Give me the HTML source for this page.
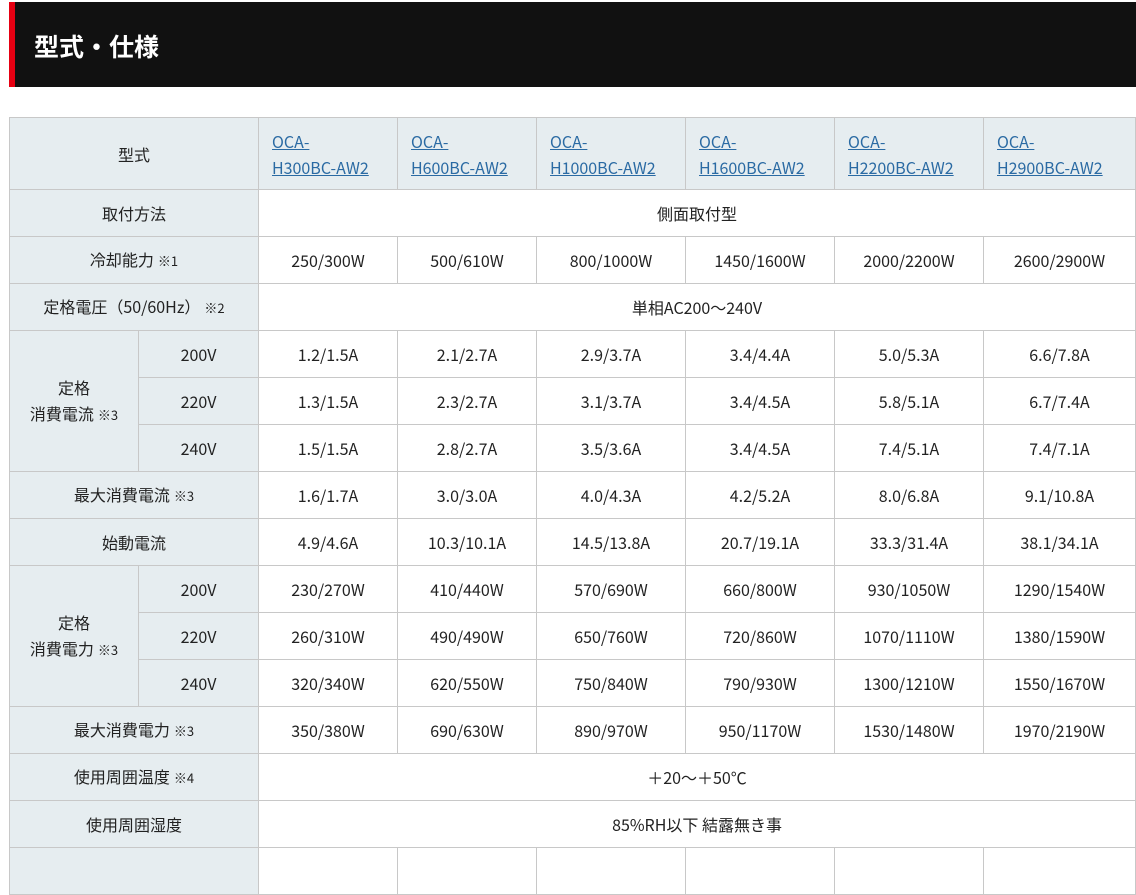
<!DOCTYPE html>
<html><head><meta charset="utf-8"><style>
html,body{margin:0;padding:0;background:#fff;width:1136px;height:851px;overflow:hidden;}
body{font-family:"Noto Sans CJK JP","Liberation Sans",sans-serif;color:#222;}
.hd{position:absolute;left:9px;top:2px;width:1127px;height:85px;background:#111;}
.hd .r{position:absolute;left:0;top:0;width:6px;height:85px;background:#e60012;}
.hd h1{position:absolute;left:25px;top:2px;margin:0;line-height:85px;font-size:25px;font-weight:bold;color:#fff;}
table{position:absolute;left:9px;top:117px;border-collapse:collapse;table-layout:fixed;width:1126px;font-size:16px;line-height:20px;}
td{border:1px solid #c8c8c8;text-align:center;height:46px;padding:0;vertical-align:middle;}
td.l{background:#e6edf0;}
td.m{background:#e6edf0;text-align:left;padding-left:13px;line-height:26px;}
td.m a{color:#2a6aa3;text-decoration:underline;}
tr.h td{height:71px;}
small{font-size:13px;margin-left:4px;}
</style></head><body>
<div class="hd"><div class="r"></div><h1>型式・仕様</h1></div>
<table>
<colgroup><col style="width:129px"><col style="width:120px"><col style="width:139px"><col style="width:139px"><col style="width:149px"><col style="width:149px"><col style="width:149px"><col style="width:152px"></colgroup>
<tr class="h"><td class="l" colspan="2">型式</td><td class="m"><a>OCA-<br>H300BC-AW2</a></td><td class="m"><a>OCA-<br>H600BC-AW2</a></td><td class="m"><a>OCA-<br>H1000BC-AW2</a></td><td class="m"><a>OCA-<br>H1600BC-AW2</a></td><td class="m"><a>OCA-<br>H2200BC-AW2</a></td><td class="m"><a>OCA-<br>H2900BC-AW2</a></td></tr>
<tr><td class="l" colspan="2">取付方法</td><td colspan="6">側面取付型</td></tr>
<tr><td class="l" colspan="2">冷却能力<small>※1</small></td><td>250/300W</td><td>500/610W</td><td>800/1000W</td><td>1450/1600W</td><td>2000/2200W</td><td>2600/2900W</td></tr>
<tr><td class="l" colspan="2">定格電圧（50/60Hz）<small>※2</small></td><td colspan="6">単相AC200～240V</td></tr>
<tr><td class="l" rowspan="3" style="line-height:26px">定格<br>消費電流<small>※3</small></td><td class="l">200V</td><td>1.2/1.5A</td><td>2.1/2.7A</td><td>2.9/3.7A</td><td>3.4/4.4A</td><td>5.0/5.3A</td><td>6.6/7.8A</td></tr>
<tr><td class="l">220V</td><td>1.3/1.5A</td><td>2.3/2.7A</td><td>3.1/3.7A</td><td>3.4/4.5A</td><td>5.8/5.1A</td><td>6.7/7.4A</td></tr>
<tr><td class="l">240V</td><td>1.5/1.5A</td><td>2.8/2.7A</td><td>3.5/3.6A</td><td>3.4/4.5A</td><td>7.4/5.1A</td><td>7.4/7.1A</td></tr>
<tr><td class="l" colspan="2">最大消費電流<small>※3</small></td><td>1.6/1.7A</td><td>3.0/3.0A</td><td>4.0/4.3A</td><td>4.2/5.2A</td><td>8.0/6.8A</td><td>9.1/10.8A</td></tr>
<tr><td class="l" colspan="2">始動電流</td><td>4.9/4.6A</td><td>10.3/10.1A</td><td>14.5/13.8A</td><td>20.7/19.1A</td><td>33.3/31.4A</td><td>38.1/34.1A</td></tr>
<tr><td class="l" rowspan="3" style="line-height:26px">定格<br>消費電力<small>※3</small></td><td class="l">200V</td><td>230/270W</td><td>410/440W</td><td>570/690W</td><td>660/800W</td><td>930/1050W</td><td>1290/1540W</td></tr>
<tr><td class="l">220V</td><td>260/310W</td><td>490/490W</td><td>650/760W</td><td>720/860W</td><td>1070/1110W</td><td>1380/1590W</td></tr>
<tr><td class="l">240V</td><td>320/340W</td><td>620/550W</td><td>750/840W</td><td>790/930W</td><td>1300/1210W</td><td>1550/1670W</td></tr>
<tr><td class="l" colspan="2">最大消費電力<small>※3</small></td><td>350/380W</td><td>690/630W</td><td>890/970W</td><td>950/1170W</td><td>1530/1480W</td><td>1970/2190W</td></tr>
<tr><td class="l" colspan="2">使用周囲温度<small>※4</small></td><td colspan="6">＋20～＋50℃</td></tr>
<tr><td class="l" colspan="2">使用周囲湿度</td><td colspan="6">85%RH以下 結露無き事</td></tr>
<tr><td class="l" colspan="2"></td><td></td><td></td><td></td><td></td><td></td><td></td></tr>
</table>
</body></html>
